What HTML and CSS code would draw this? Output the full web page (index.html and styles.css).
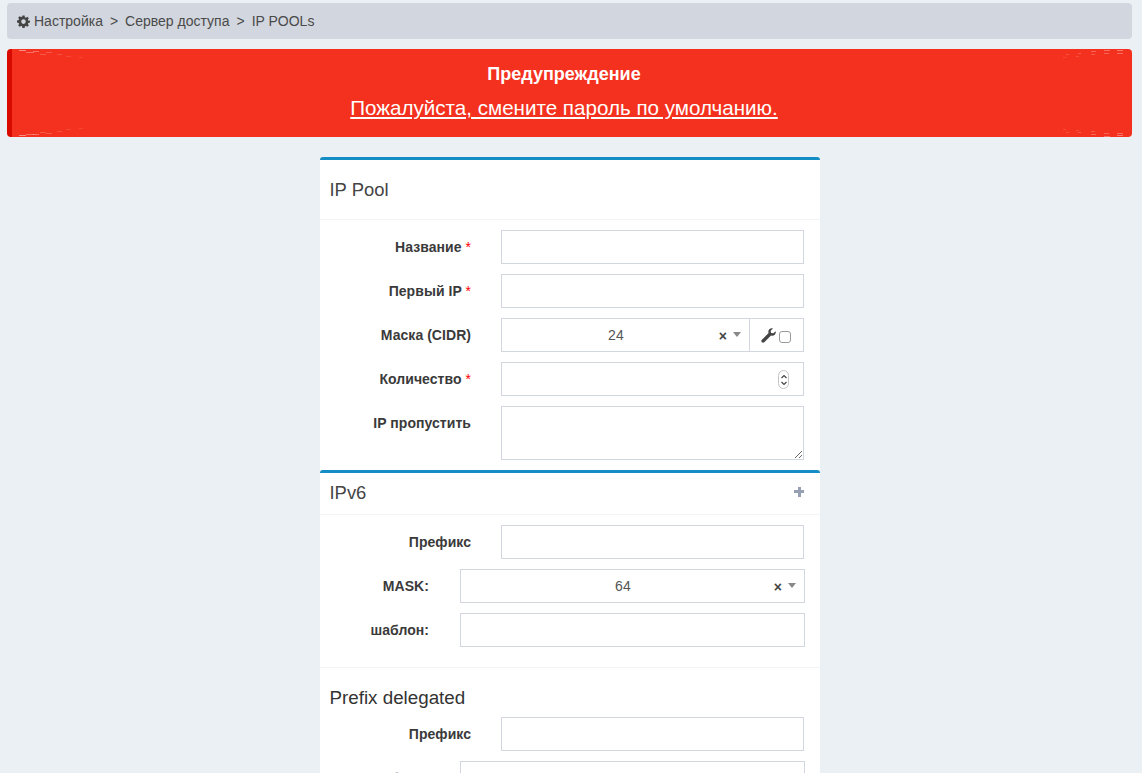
FILE: index.html
```html
<!DOCTYPE html>
<html lang="ru">
<head>
<meta charset="utf-8">
<title>IP POOLs</title>
<link rel="stylesheet" href="styles.css">
</head>
<body>
<nav class="crumbs">
  <svg class="gear" viewBox="0 0 24 24" width="13" height="13"><path fill="#444" fill-rule="evenodd" d="M10 1h4l.6 3.1 1.900.8L19.100 3.100l2.800 2.800-1.800 2.600.8 1.900L24 10v4l-3.100.6-.8 1.900 1.800 2.600-2.800 2.800-2.600-1.800-1.900.8L14 24h-4l-.6-3.100-1.900-.8-2.600 1.800-2.800-2.800 1.800-2.600-.8-1.900L0 14v-4l3.100-.6.8-1.900-1.800-2.600 2.800-2.800 2.600 1.800 1.900-.8zM12 8a4.200 4.200 0 1 0 0 8.400A4.200 4.200 0 0 0 12 8z"/></svg>
  <span>Настройка</span><span>&gt;</span><span>Сервер доступа</span><span>&gt;</span><span>IP POOLs</span>
</nav>

<section class="alert">
  <svg class="sparks sparks-tl" viewBox="0 0 80 12" width="80" height="12"><g fill="#fff"><rect x="0" y="1" width="7" height="1" opacity=".45"/><rect x="7" y="3" width="8" height="1" opacity=".3"/><rect x="14" y="2" width="6" height="1" opacity=".3"/><rect x="21" y="5" width="6" height="1" opacity=".2"/><rect x="27" y="3" width="6" height="1" opacity=".2"/><rect x="38" y="5" width="5" height="1" opacity=".15"/><rect x="47" y="7" width="5" height="1" opacity=".12"/><rect x="60" y="8" width="4" height="1" opacity=".1"/></g></svg>
  <svg class="sparks sparks-bl" viewBox="0 0 80 12" width="80" height="12"><g fill="#fff"><rect x="0" y="10" width="7" height="1" opacity=".45"/><rect x="7" y="9" width="8" height="1" opacity=".3"/><rect x="14" y="9" width="6" height="1" opacity=".3"/><rect x="21" y="7" width="6" height="1" opacity=".2"/><rect x="27" y="8" width="6" height="1" opacity=".2"/><rect x="38" y="6" width="5" height="1" opacity=".15"/><rect x="47" y="4" width="5" height="1" opacity=".12"/><rect x="60" y="3" width="4" height="1" opacity=".1"/></g></svg>
  <svg class="sparks sparks-tr" viewBox="0 0 80 12" width="80" height="12"><g fill="#fff"><rect x="66" y="1" width="6" height="1" opacity=".35"/><rect x="53" y="1" width="6" height="1" opacity=".3"/><rect x="66" y="4" width="6" height="1" opacity=".3"/><rect x="53" y="4" width="5" height="1" opacity=".25"/><rect x="40" y="2" width="5" height="1" opacity=".25"/><rect x="40" y="5" width="4" height="1" opacity=".2"/><rect x="27" y="4" width="3" height="1" opacity=".2"/><rect x="25" y="7" width="3" height="1" opacity=".15"/><rect x="15" y="5" width="3" height="1" opacity=".15"/><rect x="12" y="8" width="3" height="1" opacity=".12"/></g></svg>
  <svg class="sparks sparks-br" viewBox="0 0 80 12" width="80" height="12"><g fill="#fff"><rect x="66" y="10" width="6" height="1" opacity=".35"/><rect x="53" y="11" width="6" height="1" opacity=".3"/><rect x="66" y="8" width="6" height="1" opacity=".3"/><rect x="53" y="8" width="5" height="1" opacity=".25"/><rect x="40" y="9" width="5" height="1" opacity=".25"/><rect x="40" y="6" width="4" height="1" opacity=".2"/><rect x="27" y="7" width="3" height="1" opacity=".2"/><rect x="25" y="5" width="3" height="1" opacity=".15"/><rect x="15" y="7" width="3" height="1" opacity=".15"/><rect x="12" y="4" width="3" height="1" opacity=".12"/></g></svg>
  <h4 class="alert-title">Предупреждение</h4>
  <a class="alert-link" href="#">Пожалуйста, смените пароль по умолчанию.</a>
</section>

<main class="column">
  <section class="card">
    <header class="card-head card-head-main"><h3>IP Pool</h3></header>
    <div class="card-body">
      <div class="row"><label class="lbl">Название <i>*</i></label><input class="ctl" type="text"></div>
      <div class="row"><label class="lbl">Первый IP <i>*</i></label><input class="ctl" type="text"></div>
      <div class="row"><label class="lbl">Маска (CIDR)</label>
        <div class="group">
          <div class="select select-joined"><span class="value">24</span><span class="clear">×</span><span class="caret"></span></div>
          <div class="addon">
            <svg viewBox="0 0 16 16" width="15" height="15"><path fill="#444" d="M15.600 3.400c.4 1.300.1 2.800-.9 3.800-1.100 1.100-2.600 1.300-4 .8L3.500 15.200c-.7.700-1.900.7-2.600 0s-.7-1.900 0-2.600L8.100 5.400c-.5-1.400-.3-3 .8-4 1-1 2.500-1.300 3.800-.9L10.300 2.900l.4 2.400 2.400.4z"/></svg>
            <span class="check"></span>
          </div>
        </div>
      </div>
      <div class="row"><label class="lbl">Количество <i>*</i></label>
        <div class="ctl number"><span class="spin"><svg viewBox="0 0 8 16" width="8" height="16"><path fill="none" stroke="#444" stroke-width="1.200" d="M1.500 6 4 3.500 6.500 6M1.500 10 4 12.500 6.500 10"/></svg></span></div>
      </div>
      <div class="row"><label class="lbl">IP пропустить</label><textarea class="ctl area"></textarea></div>
    </div>
  </section>

  <section class="card">
    <header class="card-head card-head-sub"><h3>IPv6</h3><span class="plus"></span></header>
    <div class="card-body card-body-sub">
      <div class="row"><label class="lbl">Префикс</label><input class="ctl" type="text"></div>
      <div class="row row-wide"><label class="lbl">MASK:</label><div class="select"><span class="value">64</span><span class="clear">×</span><span class="caret"></span></div></div>
      <div class="row row-wide"><label class="lbl">шаблон:</label><input class="ctl" type="text"></div>
    </div>
    <div class="delegated">
      <h3>Prefix delegated</h3>
      <div class="row"><label class="lbl">Префикс</label><input class="ctl" type="text"></div>
      <div class="row row-wide"><label class="lbl">шаблон:</label><input class="ctl" type="text"></div>
    </div>
  </section>
</main>
</body>
</html>
```
FILE: styles.css
```css
* { box-sizing: border-box; }
html, body { height: 773px; overflow: hidden; }
body {
  margin: 0;
  padding: 3px 10px 0 7px;
  background: #ebf0f4;
  color: #444;
  font: 14px/20px "Liberation Sans", Arial, sans-serif;
}
.crumbs {
  display: flex;
  align-items: center;
  gap: 7px;
  height: 36px;
  padding-left: 10px;
  background: #d2d6de;
  border-radius: 4px;
  color: #4a4a4a;
}
.gear { margin-right: -3px; }
.alert {
  position: relative;
  height: 88px;
  margin-top: 10px;
  padding: 14px 16px 0 0;
  background: #f4311e;
  border-left: 5px solid #d80a00;
  border-radius: 4px;
  color: #fff;
  text-align: center;
}
.alert-title {
  margin: 0;
  font-size: 18px;
  line-height: 22px;
  font-weight: 700;
}
.alert-link {
  display: block;
  margin-top: 11px;
  font-size: 20.600px;
  line-height: 24px;
  color: #fff;
  text-decoration: underline;
}
.sparks { position: absolute; }
.sparks-tl { left: 7px; top: 0; }
.sparks-bl { left: 7px; bottom: 0; }
.sparks-tr { right: 1px; top: 0; }
.sparks-br { right: 1px; bottom: 0; }
.column { width: 500px; margin: 20px 0 0 313px; }
.card {
  background: #fff;
  border-top: 3px solid #148dc4;
  border-radius: 3px 3px 0 0;
}
.card-head {
  display: flex;
  align-items: center;
  justify-content: space-between;
  padding: 0 16px 0 9.500px;
  border-bottom: 1px solid #f2f4f5;
}
.card-head-main { height: 60px; }
.card-head-sub { height: 42px; padding-bottom: 2px; }
.card-head h3, .delegated h3 {
  margin: 0;
  font-size: 18.400px;
  font-weight: 400;
  line-height: 22px;
}
.plus {
  width: 10px;
  height: 10px;
  margin-top: -2px;
  background:
    linear-gradient(#97a0b3, #97a0b3) center / 10px 3px no-repeat,
    linear-gradient(#97a0b3, #97a0b3) center / 3px 10px no-repeat;
}
.card-body { display: flex; flex-direction: column; gap: 10px; padding: 10px 16px 10px 0; }
.card-body-sub { padding-bottom: 20px; }
.row {
  display: grid;
  grid-template-columns: 151px 303px;
  column-gap: 30px;
  align-items: start;
}
.row-wide { grid-template-columns: 109px 345px; column-gap: 31px; }
.lbl {
  padding-top: 7px;
  font-weight: 700;
  text-align: right;
  color: #3a3a3a;
  font-size: 14px;
  line-height: 20px;
  letter-spacing: .05px;
}
.lbl i { color: #f00; font-style: normal; font-weight: 400; }
.ctl {
  display: block;
  width: 100%;
  height: 34px;
  margin: 0;
  padding: 6px 12px;
  background: #fff;
  border: 1px solid #d2d6de;
  border-radius: 0;
  font: inherit;
}
.area { height: 54px; resize: vertical; }
.number { position: relative; }
.spin {
  position: absolute;
  top: 7px;
  right: 14px;
  display: flex;
  width: 11px;
  height: 19px;
  align-items: center;
  justify-content: center;
  border: 1px solid #c4c4c4;
  border-radius: 6px;
}
.group { display: flex; height: 34px; }
.select {
  position: relative;
  display: flex;
  align-items: center;
  height: 34px;
  padding: 0 8px 0 11px;
  border: 1px solid #d2d6de;
  background: #fff;
}
.select-joined { flex: 1; }
.value { flex: 1; text-align: center; font-size: 14px; color: #555; }
.clear { margin: 2px 6px 0 0; font-weight: 700; font-size: 14px; line-height: 16px; color: #444; }
.caret {
  width: 0;
  height: 0;
  margin-top: -1px;
  border-style: solid;
  border-width: 5px 4.500px 0;
  border-color: #888 transparent transparent;
}
.addon {
  display: flex;
  align-items: center;
  gap: 3px;
  width: 54px;
  height: 34px;
  padding-left: 11px;
  border: 1px solid #d2d6de;
  border-left: 0;
}
.check {
  width: 12px;
  height: 12px;
  margin-top: 3px;
  border: 1px solid #999;
  border-radius: 3px;
  background: #fff;
}
.delegated {
  display: flex;
  flex-direction: column;
  gap: 10px;
  height: 200px;
  padding: 19px 16px 0 0;
  border-top: 1px solid #f2f4f5;
}
.delegated h3 { padding-left: 9.500px; margin-bottom: -2px; color: #333; font-size: 18.800px; }
```
